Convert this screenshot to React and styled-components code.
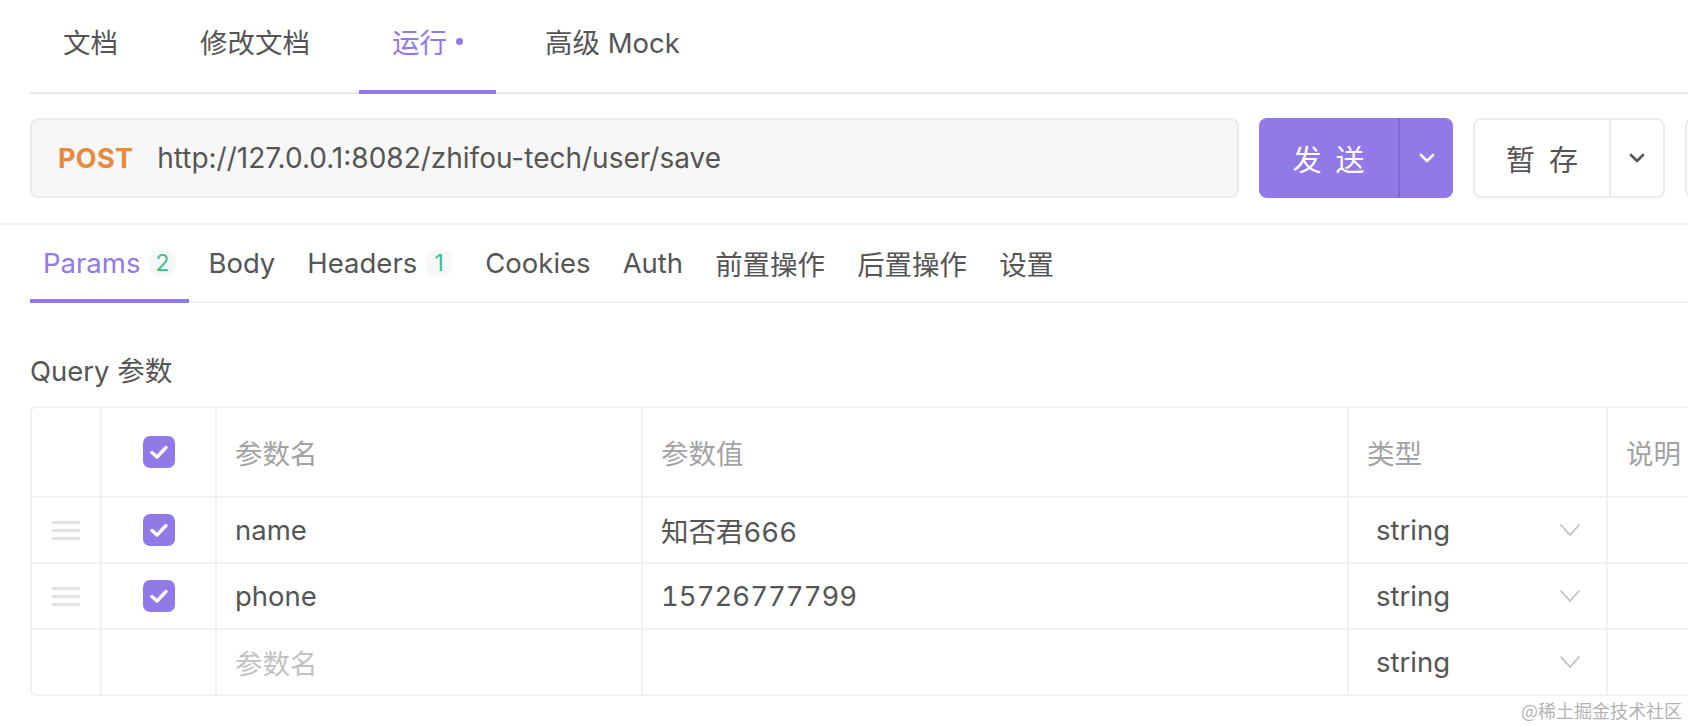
import React from "react";
import styled, { createGlobalStyle, css } from "styled-components";

const GlobalStyle = createGlobalStyle`
  html, body { margin: 0; padding: 0; background: #fff; }
  body {
    font-family: Inter, "Noto Sans CJK SC", sans-serif;
    color: #555;
    overflow: hidden;
  }
  * { box-sizing: border-box; }
`;

const PURPLE = "#9179e8";
const LINE = "#f1f1f3";

const Page = styled.div`
  position: relative;
  width: 1688px;
  height: 726px;
  overflow: hidden;
  background: #fff;
`;

const TopTabs = styled.div`
  display: flex;
  gap: 16px;
  margin-left: 30px;
  height: 94px;
  border-bottom: 2px solid #e9e9eb;
`;

const TopTab = styled.div`
  position: relative;
  display: flex;
  align-items: center;
  gap: 9px;
  padding: 0 33px 10px;
  font-size: 27.5px;
  color: ${(p) => (p.$active ? PURPLE : "#555")};
  ${(p) =>
    p.$active &&
    css`
      &::after {
        content: "";
        position: absolute;
        left: 0;
        right: 0;
        bottom: -2px;
        height: 4px;
        background: ${PURPLE};
      }
    `}
`;

const Dot = styled.span`
  width: 7px;
  height: 7px;
  border-radius: 50%;
  background: ${PURPLE};
`;

const UrlRow = styled.div`
  display: flex;
  gap: 20px;
  margin-top: 24px;
  padding-left: 30px;
  height: 80px;
`;

const UrlBar = styled.div`
  flex: 0 0 1209px;
  display: flex;
  align-items: center;
  gap: 24px;
  padding-left: 26px;
  background: #f7f7f7;
  border: 2px solid #ececec;
  border-radius: 8px;
`;

const Method = styled.span`
  font-size: 27px;
  font-weight: 700;
  color: #e8893c;
  letter-spacing: 0.3px;
`;

const UrlText = styled.span`
  font-size: 28px;
  color: #555;
`;

const SplitButton = styled.div`
  flex: 0 0 ${(p) => p.$w}px;
  display: flex;
  border-radius: 8px;
  overflow: hidden;
  ${(p) =>
    p.$primary
      ? css`
          background: ${PURPLE};
          color: #fff;
        `
      : css`
          background: #fff;
          color: #555;
          border: 2px solid #ebebeb;
        `}
`;

const MainPart = styled.div`
  flex: 1;
  display: flex;
  align-items: center;
  justify-content: center;
  font-size: 29px;
  letter-spacing: 14px;
  padding-left: 14px;
`;

const ArrowPart = styled.div`
  flex: 0 0 ${(p) => p.$w}px;
  display: flex;
  align-items: center;
  justify-content: center;
  border-left: 2px solid ${(p) => (p.$primary ? "#8068d6" : "#ebebeb")};
`;

const GhostButton = styled.div`
  flex: 0 0 120px;
  border: 2px solid #ebebeb;
  border-radius: 8px;
`;

const Divider = styled.div`
  margin-top: 25px;
  height: 2px;
  background: #efeff1;
`;

const SubTabs = styled.div`
  display: flex;
  gap: 6px;
  margin-left: 30px;
  height: 78px;
  border-bottom: 2px solid ${LINE};
`;

const SubTab = styled.div`
  position: relative;
  display: flex;
  align-items: center;
  padding: 0 13px 0 13px;
  font-size: 27.5px;
  color: ${(p) => (p.$active ? PURPLE : "#555")};
  ${(p) =>
    p.$active &&
    css`
      &::after {
        content: "";
        position: absolute;
        left: 0;
        right: 0;
        bottom: -2px;
        height: 4px;
        background: ${PURPLE};
      }
    `}
`;

const Badge = styled.span`
  display: inline-flex;
  align-items: center;
  justify-content: center;
  width: 28px;
  height: 28px;
  margin-left: 8px;
  border-radius: 50%;
  background: #f6f7f7;
  color: #3dbf8c;
  font-size: 23px;
`;

const SectionTitle = styled.div`
  margin: 50px 0 0 30px;
  font-size: 27.5px;
  line-height: 36px;
  color: #555;
`;

const Table = styled.div`
  margin: 17px 0 0 30px;
  width: 1900px;
  display: grid;
  grid-template-columns: 68px 115px 426px 706px 259px 324px;
  grid-template-rows: 88px 66px 66px 66px;
  border: 2px solid ${LINE};
  border-right: none;
  border-radius: 6px 0 0 6px;
`;

const Cell = styled.div`
  display: flex;
  align-items: center;
  justify-content: ${(p) => (p.$center ? "center" : "flex-start")};
  padding: 0 ${(p) => (p.$center ? 0 : 18)}px;
  border-left: ${(p) => (p.$first ? "none" : `2px solid ${LINE}`)};
  border-top: ${(p) => (p.$top ? "none" : `2px solid ${LINE}`)};
  font-size: 27.5px;
  font-feature-settings: "tnum" 1;
  color: ${(p) => (p.$head ? "#a3a3a3" : p.$placeholder ? "#c2c2c2" : "#555")};
`;

const SelectBox = styled.div`
  flex: 1;
  display: flex;
  align-items: center;
  justify-content: space-between;
  padding: 0 7px 0 9px;
  color: #555;
`;

const Handle = styled.div`
  display: flex;
  flex-direction: column;
  gap: 5px;
  width: 28px;
  & > span {
    height: 3px;
    background: #e2e2e2;
  }
`;

const Check = styled.div`
  width: 32px;
  height: 32px;
  border-radius: 7px;
  background: ${PURPLE};
  display: flex;
  align-items: center;
  justify-content: center;
`;

const Watermark = styled.div`
  position: absolute;
  right: 6px;
  bottom: 3px;
  font-size: 18px;
  color: #b3b3b3;
  font-family: "Noto Sans CJK SC", sans-serif;
`;

const ChevronBold = ({ color }) => (
  <svg width="16" height="10" viewBox="0 0 16 10">
    <path d="M2 2 L8 8 L14 2" fill="none" stroke={color} strokeWidth="2.6" strokeLinecap="round" strokeLinejoin="round" />
  </svg>
);

const ChevronThin = () => (
  <svg width="22" height="14" viewBox="0 0 22 14">
    <path d="M1.5 1.5 L11 12 L20.5 1.5" fill="none" stroke="#bdbdbd" strokeWidth="1.6" />
  </svg>
);

const CheckBox = () => (
  <Check>
    <svg width="20" height="16" viewBox="0 0 20 16">
      <path d="M3 8.5 L8 13 L17 3.5" fill="none" stroke="#fff" strokeWidth="3.4" strokeLinecap="round" strokeLinejoin="round" />
    </svg>
  </Check>
);

const DragHandle = () => (
  <Handle>
    <span />
    <span />
    <span />
  </Handle>
);

const rows = [
  { name: "name", value: "知否君666", checked: true },
  { name: "phone", value: "15726777799", checked: true },
  { name: "", value: "", checked: false },
];

export default function App() {
  return (
    <Page>
      <GlobalStyle />
      <TopTabs>
        <TopTab>文档</TopTab>
        <TopTab>修改文档</TopTab>
        <TopTab $active>
          运行
          <Dot />
        </TopTab>
        <TopTab>高级 Mock</TopTab>
      </TopTabs>

      <UrlRow>
        <UrlBar>
          <Method>POST</Method>
          <UrlText>http://127.0.0.1:8082/zhifou-tech/user/save</UrlText>
        </UrlBar>
        <SplitButton $primary $w={194}>
          <MainPart>发送</MainPart>
          <ArrowPart $primary $w={55}>
            <ChevronBold color="#fff" />
          </ArrowPart>
        </SplitButton>
        <SplitButton $w={192}>
          <MainPart>暂存</MainPart>
          <ArrowPart $w={54}>
            <ChevronBold color="#555" />
          </ArrowPart>
        </SplitButton>
        <GhostButton />
      </UrlRow>

      <Divider />

      <SubTabs>
        <SubTab $active>
          Params<Badge>2</Badge>
        </SubTab>
        <SubTab>Body</SubTab>
        <SubTab>
          Headers<Badge>1</Badge>
        </SubTab>
        <SubTab>Cookies</SubTab>
        <SubTab>Auth</SubTab>
        <SubTab>前置操作</SubTab>
        <SubTab>后置操作</SubTab>
        <SubTab>设置</SubTab>
      </SubTabs>

      <SectionTitle>Query 参数</SectionTitle>

      <Table>
        <Cell $first $top $center />
        <Cell $top $center>
          <CheckBox />
        </Cell>
        <Cell $top $head>参数名</Cell>
        <Cell $top $head>参数值</Cell>
        <Cell $top $head>类型</Cell>
        <Cell $top $head>说明</Cell>
        {rows.map((r, i) => (
          <React.Fragment key={i}>
            <Cell $first $center>{r.checked && <DragHandle />}</Cell>
            <Cell $center>{r.checked && <CheckBox />}</Cell>
            <Cell $placeholder={!r.name}>{r.name || "参数名"}</Cell>
            <Cell>{r.value}</Cell>
            <Cell>
              <SelectBox>
                string
                <ChevronThin />
              </SelectBox>
            </Cell>
            <Cell />
          </React.Fragment>
        ))}
      </Table>

      <Watermark>@稀土掘金技术社区</Watermark>
    </Page>
  );
}
